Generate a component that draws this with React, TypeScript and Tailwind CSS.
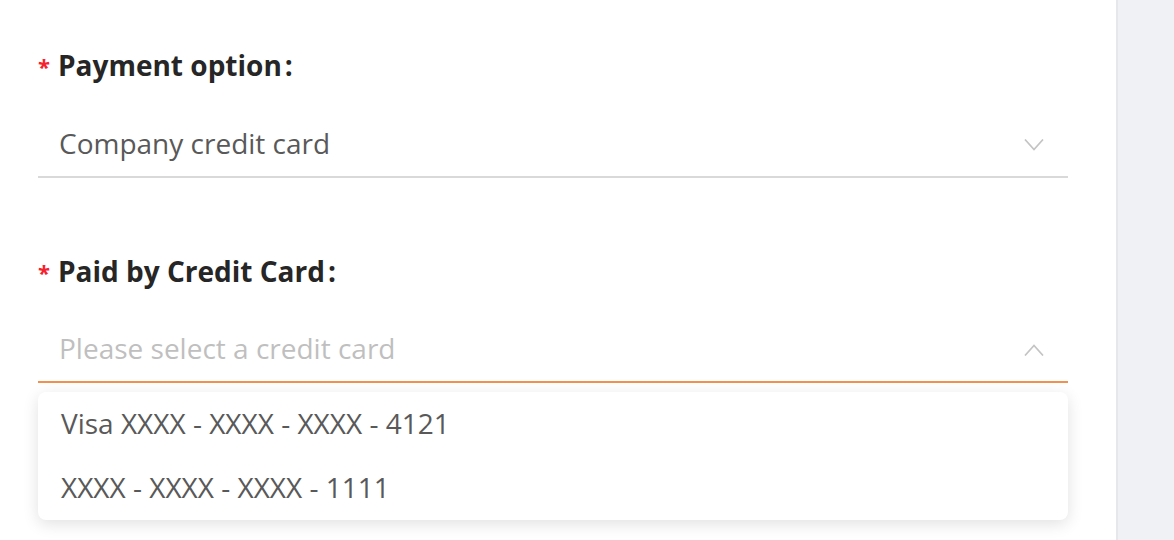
import { useState } from "react";

const cards = ["Visa XXXX - XXXX - XXXX - 4121", "XXXX - XXXX - XXXX - 1111"];

function Chevron({ up }: { up?: boolean }) {
  return (
    <svg width="20" height="12" viewBox="0 0 20 12" fill="none" className="shrink-0">
      <path
        d={up ? "M1 11.5 L10 1.5 L19 11.5" : "M1 0.5 L10 10.5 L19 0.5"}
        stroke="#c4c4c4"
        strokeWidth="1.7"
        strokeLinejoin="miter"
      />
    </svg>
  );
}

function Label({ text }: { text: string }) {
  return (
    <div className="flex h-10 items-center pb-[2px]">
      <span className="mr-[9px] mt-[2px] w-[11px] text-[22px] font-bold leading-none text-[#f5222d]">*</span>
      <span className="text-[28px] font-bold text-[#262626]">{text}</span>
      <span className="ml-[3px] text-[28px] font-bold text-[#262626]">:</span>
    </div>
  );
}

export default function App() {
  const [open] = useState(true);

  return (
    <div className="flex h-[540px] w-full bg-white" style={{ fontFamily: '"Open Sans", "Noto Sans", sans-serif' }}>
      <main className="w-[1116px] shrink-0 pl-[38px] pr-[48px] pt-[46px]">
        <Label text="Payment option" />
        <div className="mt-[27px] flex h-[65px] items-center justify-between border-b-2 border-[#d9d9d9] pl-[21px] pr-[24px]">
          <span className="pb-[3px] text-[28px] text-[#595959]">Company credit card</span>
          <Chevron />
        </div>

        <div className="mt-[74px]">
          <Label text="Paid by Credit Card" />
        </div>
        <div className="mt-[26px] flex h-[65px] items-center justify-between border-b-2 border-[#f0914f] pl-[21px] pr-[24px]">
          <span className="pb-[3px] text-[28px] text-[#bfbfbf]">Please select a credit card</span>
          <Chevron up />
        </div>

        {open && (
          <ul className="mt-[9px] rounded-lg bg-white shadow-[0_4px_16px_rgba(0,0,0,0.12)]">
            {cards.map((card) => (
              <li key={card} className="flex h-16 items-center pb-[2px] pl-[23px] text-[28px] text-[#595959]">
                {card}
              </li>
            ))}
          </ul>
        )}
      </main>
      <aside className="flex-1 border-l-2 border-[#e6e7eb] bg-[#f0f1f5]" />
    </div>
  );
}
